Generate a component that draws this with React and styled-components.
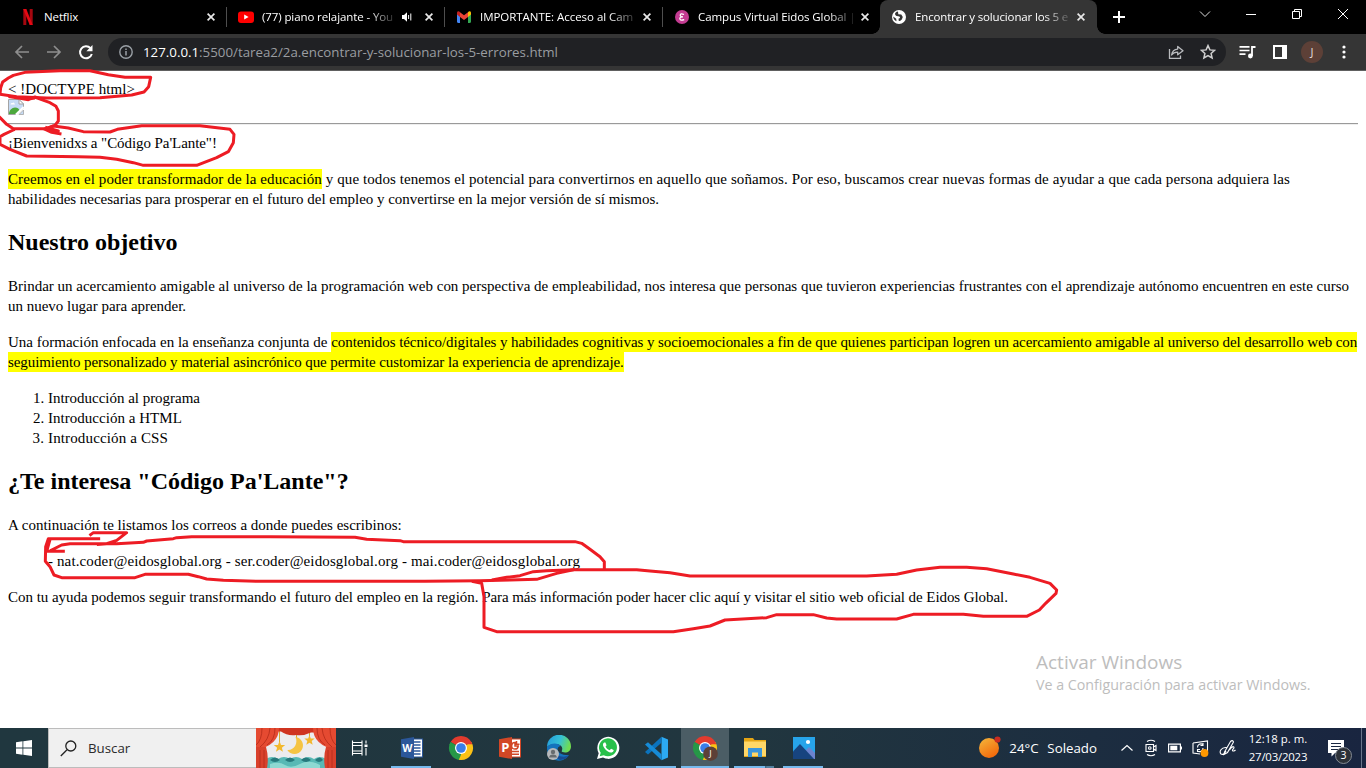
import React from "react";
import styled, { createGlobalStyle, css } from "styled-components";

const GlobalStyle = createGlobalStyle`
  * { box-sizing: border-box; }
  body { margin: 0; background: #fff; overflow: hidden; }
`;

const ui = `"Open Sans", "Noto Sans", sans-serif`;

const Screen = styled.div`
  position: relative;
  display: flex;
  flex-direction: column;
  width: 1366px;
  height: 768px;
  font-family: ${ui};
`;

/* ---------- Browser chrome ---------- */
const TabStrip = styled.div`
  display: flex;
  height: 34px;
  background: #000;
  padding-left: 9px;
`;
const Tab = styled.div`
  position: relative;
  display: flex;
  align-items: center;
  gap: 8px;
  width: 218px;
  height: 34px;
  padding: 0 12px 0 11px;
  color: #fff;
  ${(p) =>
    !p.$last &&
    css`
      &::after {
        content: "";
        position: absolute;
        right: 0;
        top: 7px;
        width: 1px;
        height: 20px;
        background: #4e4e4e;
      }
    `}
  ${(p) =>
    p.$active &&
    css`
      background: #353535;
      width: 217px;
      border-radius: 8px 8px 0 0;
      padding: 0 12px 0 11px;
      margin-left: -1px;
      &::before,
      &::after {
        content: "";
        position: absolute;
        bottom: 0;
        width: 8px;
        height: 8px;
      }
      &::before {
        left: -8px;
        background: radial-gradient(circle at 0 0, transparent 7.5px, #353535 8px);
      }
      &::after {
        right: -8px;
        background: radial-gradient(circle at 100% 0, transparent 7.5px, #353535 8px);
      }
    `}
`;
const TabTitle = styled.span`
  flex: 1;
  min-width: 0;
  white-space: pre;
  font-size: 11.5px;
  line-height: 16px;
  letter-spacing: ${(p) => p.$ls}px;
  ${(p) =>
    p.$fade &&
    css`
      mask-image: linear-gradient(90deg, #000 calc(100% - 26px), rgba(0, 0, 0, 0.15));
    `}
`;
const WindowControls = styled.div`
  display: flex;
  align-items: center;
  margin-left: auto;
  padding: 0 17px 6px 0;
  gap: 34px;
  color: #fff;
`;
const NewTab = styled.div`
  display: flex;
  align-items: center;
  margin-left: 16px;
`;
const Toolbar = styled.div`
  display: flex;
  align-items: center;
  height: 37px;
  padding: 0 14px 1px;
  background: #353535;
  border-bottom: 1px solid #606060;
`;
const NavButtons = styled.div`
  display: flex;
  align-items: center;
  gap: 16px;
  width: 94px;
`;
const Omnibox = styled.div`
  display: flex;
  align-items: center;
  width: 1118px;
  height: 28px;
  padding: 0 10px 0 11px;
  border-radius: 14px;
  background: #202124;
  gap: 10px;
`;
const Url = styled.div`
  flex: 1;
  white-space: pre;
  font-size: 13.3px;
  color: #9a9da1;
`;
const Host = styled.span`
  color: #fff;
`;
const OmniboxActions = styled.div`
  display: flex;
  gap: 16px;
`;
const Actions = styled.div`
  display: flex;
  align-items: center;
  gap: 14px;
  margin-left: 13px;
`;
const PanelButton = styled.div`
  display: flex;
  margin-left: 3px;
`;
const Avatar = styled.div`
  width: 22px;
  height: 22px;
  border-radius: 50%;
  background: #5d4037;
  color: #e6dedb;
  font-size: 11px;
  line-height: 22px;
  text-align: center;
`;

/* ---------- Web page ---------- */
const Page = styled.main`
  flex: 1;
  padding: 8px;
  background: #fff;
  color: #000;
  font: 15px/20px "Liberation Serif", "Times New Roman", serif;
`;
const Paragraph = styled.p`
  margin: ${(p) => (p.$indent ? "16px 40px" : "16px 0")};
`;
const Line = styled.div`
  height: 20px;
  white-space: pre;
  letter-spacing: ${(p) => p.$ls || 0}px;
`;
const Run = styled.span`
  letter-spacing: ${(p) => p.$ls || 0}px;
`;
const Mark = styled.mark`
  display: inline-block;
  height: 20px;
  background: #ff0;
  color: #000;
  letter-spacing: ${(p) => p.$ls || 0}px;
`;
const Heading = styled.h2`
  margin: 20px 0;
  font-size: 24px;
  line-height: 27px;
`;
const Picture = styled.div`
  display: flex;
  height: 16px;
`;
const Rule = styled.hr`
  margin: 8px 0;
  height: 2px;
  border: 0;
  border-top: 1px solid #9a9a9a;
  border-bottom: 1px solid #eee;
`;
const List = styled.ol`
  margin: 16px 0;
  padding-left: 40px;
`;
const Item = styled.li`
  height: 20px;
  letter-spacing: ${(p) => p.$ls || 0}px;
`;
const Watermark = styled.div`
  position: absolute;
  left: 1036px;
  top: 650px;
  color: #bdbdbd;
  white-space: nowrap;
`;
const WatermarkTitle = styled.div`
  font-size: 19px;
  line-height: 25px;
`;
const WatermarkText = styled.div`
  font-size: 14.25px;
  line-height: 20px;
`;
const Ink = styled.svg`
  position: absolute;
  left: 0;
  top: 66px;
  pointer-events: none;
`;

/* ---------- Taskbar ---------- */
const Taskbar = styled.footer`
  display: flex;
  height: 40px;
  background: linear-gradient(90deg, #20373f 0%, #21363f 55%, #1c2d40 80%, #192540 100%);
  color: #fff;
`;
const Start = styled.div`
  display: flex;
  align-items: center;
  justify-content: center;
  width: 48px;
`;
const Search = styled.div`
  display: flex;
  align-items: center;
  gap: 11px;
  width: 208px;
  padding-left: 11px;
  background: #f0f0f0;
  border: 1px solid #bcbcbc;
  border-right: 0;
  color: #2b2b2b;
  font-size: 13.3px;
`;
const TaskView = styled.div`
  display: flex;
  align-items: center;
  width: 51px;
  padding-left: 15px;
`;
const TaskButton = styled.div`
  position: relative;
  display: flex;
  align-items: center;
  justify-content: center;
  width: ${(p) => (p.$active ? 48 : 49)}px;
  margin-right: ${(p) => (p.$active ? 1 : 0)}px;
  background: ${(p) => (p.$active ? "#4b5d65" : "transparent")};
  ${(p) =>
    p.$open &&
    css`
      &::after {
        content: "";
        position: absolute;
        left: ${p.$active ? 0 : 4}px;
        right: ${p.$active ? 0 : 5}px;
        bottom: 0;
        height: 2px;
        background: ${p.$stacked
          ? "linear-gradient(90deg,#76b9ed 31px,#3c5f78 31px,#53809f 33px)"
          : "#76b9ed"};
      }
    `}
`;
const Weather = styled.div`
  display: flex;
  align-items: center;
  margin-left: auto;
  font-size: 13.3px;
  white-space: pre;
`;
const Temperature = styled.span`
  width: 38px;
  margin-left: 8px;
`;
const Tray = styled.div`
  display: flex;
  align-items: center;
  margin-left: 23px;
  gap: 10px;
`;
const Clock = styled.div`
  width: 60px;
  margin-left: 11px;
  padding-top: 2px;
  font-size: 11.4px;
  line-height: 18px;
  text-align: center;
  white-space: nowrap;
`;
const DateText = styled.div`
  letter-spacing: -0.2px;
`;
const Notices = styled.div`
  position: relative;
  display: flex;
  align-items: center;
  width: 33px;
  margin-left: 20px;
`;
const NoticeCount = styled.div`
  position: absolute;
  left: 7px;
  top: 19px;
  width: 17px;
  height: 17px;
  border: 1px solid #858b94;
  border-radius: 50%;
  background: #2c3138;
  font-size: 10.5px;
  line-height: 15px;
  text-align: center;
`;
const ShowDesktop = styled.div`
  width: 5px;
  border-left: 1px solid #69758a;
`;

const CloseIcon = () => (
  <svg width="8" height="8" viewBox="0 0 8 8">
    <path d="M.6.6l6.8 6.8M7.4.6L.6 7.4" stroke="#e8e8e8" strokeWidth="1.7" />
  </svg>
);
const NetflixIcon = () => (
  <svg width="16" height="16" viewBox="0 0 16 16">
    <path d="M3.3 0h3v16h-3zM9.7 0h3v16h-3z" fill="#a5070f" />
    <path d="M3.3 0h3l6.4 16h-3z" fill="#e50914" />
  </svg>
);
const YoutubeIcon = () => (
  <svg width="16" height="16" viewBox="0 0 16 16">
    <rect y="2.5" width="16" height="11.5" rx="3" fill="#f00" />
    <path d="M6.2 5.6v5l4.4-2.5z" fill="#fff" />
  </svg>
);
const AudioIcon = () => (
  <svg width="10" height="10" viewBox="0 0 10 10" style={undefined}>
    <path d="M0 3h2L5 .3v9.4L2 7H0z" fill="#fff" />
    <path d="M6.6 3v4M8.8 1.5v7" stroke="#fff" strokeWidth="1" />
  </svg>
);
const AudioSlot = styled.div`
  display: flex;
  margin-right: 5px;
`;
const GmailIcon = () => (
  <svg width="16" height="16" viewBox="0 0 16 16">
    <path d="M1 4v8.8c0 .7.4 1.2 1.2 1.2H4V6z" fill="#4285f4" />
    <path d="M12 6v8h1.8c.8 0 1.2-.5 1.2-1.2V4z" fill="#34a853" />
    <path d="M12 3.2V8l3-2.4V4c0-1.8-1.8-2.4-3-.8z" fill="#fbbc04" />
    <path d="M4 3.2V8L1 5.6V4c0-1.8 1.8-2.4 3-.8z" fill="#c5221f" />
    <path d="M4 3.2l4 3.1 4-3.1V8l-4 3-4-3z" fill="#ea4335" />
  </svg>
);
const EidosIcon = () => (
  <svg width="16" height="16" viewBox="0 0 16 16">
    <circle cx="8" cy="8" r="7" fill="#c33b91" />
    <path d="M10 5.5Q6.2 4 6.2 6.3 6.2 7.7 9 7.8 5.8 7.8 5.8 9.6 6 12 10.2 10.6" fill="none" stroke="#fff" strokeWidth="1.2" />
  </svg>
);
const GlobeIcon = () => (
  <svg width="16" height="16" viewBox="0 0 16 16">
    <circle cx="8" cy="8" r="7" fill="#fff" />
    <path d="M7 2.5q-3 .5-3 2.800Q4.500 7.500 7.500 7.300 9.300 7.500 9 9l-1.500.8.300 2.200q1 .5 3-1.500l1-2.500-1.500-2.500-3-.2z" fill="#353535" />
    <path d="M2.200 7.500l3 2.200.3 2.600q-3-1.200-3.300-4.800z" fill="#353535" />
  </svg>
);
const ArrowIcon = ({ flip }) => (
  <svg width="16" height="16" viewBox="0 0 16 16">
    <path
      d={flip ? "M1 8h13M8 2l6 6-6 6" : "M15 8H2M8 2L2 8l6 6"}
      fill="none"
      stroke="#8e8e8e"
      strokeWidth="1.7"
    />
  </svg>
);
const ReloadIcon = () => (
  <svg width="16" height="16" viewBox="0 0 16 16">
    <path d="M12.5 4.2A6 6 0 1 0 13.8 10" fill="none" stroke="#fff" strokeWidth="2" />
    <path d="M14.5 1v6.2H8.4z" fill="#fff" />
  </svg>
);
const InfoIcon = () => (
  <svg width="14" height="14" viewBox="0 0 14 14">
    <circle cx="7" cy="7" r="6.2" fill="none" stroke="#9aa0a6" strokeWidth="1.4" />
    <path d="M7 6v4.4M7 3.4v1.5" stroke="#9aa0a6" strokeWidth="1.5" />
  </svg>
);
const ShareIcon = () => (
  <svg width="16" height="16" viewBox="0 0 16 16" fill="none" stroke="#b9bbbe" strokeWidth="1.3">
    <path d="M1.500 5v9.300h11V11.500" />
    <path d="M3.600 11C4.200 7 6.200 5.200 9.700 5.100V2.400L15 6.800l-5.300 4V8.100C6.800 8 5 8.800 3.600 11z" strokeLinejoin="round" />
  </svg>
);
const StarIcon = () => (
  <svg width="16" height="16" viewBox="0 0 16 16">
    <path d="M8 1.600l1.900 4.300 4.700.4-3.500 3.100 1 4.600L8 11.600 3.900 14l1-4.600-3.500-3.100 4.700-.4z" fill="none" stroke="#d0d0d0" strokeWidth="1.5" />
  </svg>
);
const QueueIcon = () => (
  <svg width="17" height="14" viewBox="0 0 17 14">
    <path d="M.5 1.800h10M.5 5.500h10M.5 9.200h6" stroke="#fff" strokeWidth="1.7" />
    <path d="M13 11V2h3.500" fill="none" stroke="#fff" strokeWidth="1.8" />
    <circle cx="11.400" cy="11" r="2.400" fill="#fff" />
  </svg>
);
const PanelIcon = () => (
  <svg width="14" height="14" viewBox="0 0 14 14">
    <path fillRule="evenodd" d="M0 0h14v14H0zM2 2v10h7V2z" fill="#fff" />
  </svg>
);
const MenuIcon = () => (
  <svg width="14" height="14" viewBox="0 0 14 14" fill="#fff">
    <circle cx="7" cy="2" r="1.600" />
    <circle cx="7" cy="7" r="1.600" />
    <circle cx="7" cy="12" r="1.600" />
  </svg>
);

const BrokenImage = () => (
  <svg width="16" height="16" viewBox="0 0 16 16">
    <path d="M.5.5h10.500l4.500 4.500v4.500L9 15.500H.5z" fill="#c6dbf5" stroke="#a4a4a4" />
    <path d="M11 .5v4.500h4.500z" fill="#fff" stroke="#a4a4a4" />
    <path d="M2.500 5.500q0-2 2-1.500 1.500-1.500 2.500 1.500z" fill="#fff" />
    <path d="M1 14q1-5 6-5.500 4 .2 5 4L9 15H1z" fill="#4ca83c" />
    <path d="M8 15.800L15.800 8" stroke="#fff" strokeWidth="2.400" />
    <path d="M15.500 11v4.500H11z" fill="#c6dbf5" stroke="#a4a4a4" strokeWidth=".8" />
  </svg>
);

const ChromeLogo = ({ profile }) => (
  <svg width="26" height="26" viewBox="0 0 26 26">
    <path d="M13 13L2.600 7A12 12 0 0 1 23.400 7z" fill="#e33b2e" />
    <path d="M13 13L23.400 7A12 12 0 0 1 13 25z" fill="#fbc116" />
    <path d="M13 13L13 25A12 12 0 0 1 2.600 7z" fill="#269847" />
    <path d="M13 7h10.400l.9 2.200H13z" fill="#e33b2e" />
    <path d="M18.200 16L13 25l-2.200-.3 4-8.700z" fill="#fbc116" />
    <path d="M7.800 16L2.600 7l-1 2.200 4 8.800z" fill="#269847" />
    <circle cx="13" cy="13" r="6" fill="#fff" />
    <circle cx="13" cy="13" r="4.800" fill="#3a7ee8" />
    {profile && <circle cx="18.500" cy="18.700" r="7.300" fill="#5d4037" />}
    {profile && (
      <text x="18.500" y="22" fontSize="9" textAnchor="middle" fill="#fff">J</text>
    )}
  </svg>
);
const OfficeLogo = ({ letter, color }) => (
  <svg width="24" height="24" viewBox="0 0 24 24">
    <rect x="11" y="3" width="11.500" height="18" fill="#fff" stroke={color} strokeWidth="1" />
    {letter === "W" ? (
      <path d="M14 6h6.500M14 9h6.500M14 12h6.500M14 15h6.500M14 18h6.500" stroke={color} strokeWidth="1.400" />
    ) : (
      <path d="M17 6.500a3.300 3.300 0 1 0 3.200 3.600H17zM18.500 5v3.200h3M14 15.500h7M14 18.300h7" fill="none" stroke={color} strokeWidth="1.500" />
    )}
    <path d="M1 3.200L14 1v22L1 20.800z" fill={color} />
    <text x="7.400" y="16.200" fontSize={letter === "W" ? 10.500 : 13} fontWeight="700" textAnchor="middle" fill="#fff">
      {letter}
    </text>
  </svg>
);
const EdgeLogo = () => (
  <svg width="26" height="26" viewBox="0 0 26 26">
    <defs>
      <linearGradient id="edgeTop" x1="0" x2="1" y1=".1" y2=".4">
        <stop offset="0" stopColor="#239bdc" />
        <stop offset=".55" stopColor="#35c1d7" />
        <stop offset="1" stopColor="#70dc51" />
      </linearGradient>
    </defs>
    <path d="M1 12A12 12 0 0 1 25 11.500c0 5-4.500 7-8.500 5.600-1.500-.6-.4-1.500-.2-3C16.500 9 7 7 1 12z" fill="url(#edgeTop)" />
    <path d="M1 12C5 7 13 8 14.500 11c-5 1-4.500 9.500 8.500 9.300A12 12 0 0 1 1 13z" fill="#1473bd" />
    <path d="M10 14c-1 6 6 10 13 6.300A12 12 0 0 1 14 25C9 23 8 18 10 14z" fill="#174b93" />
    <circle cx="7" cy="19" r="6" fill="#b7b9bc" />
    <circle cx="7" cy="17" r="2.200" fill="#686c70" />
    <path d="M3.200 22.500q0-3 3.800-3t3.800 3z" fill="#686c70" />
  </svg>
);
const WhatsappLogo = () => (
  <svg width="24" height="24" viewBox="0 0 24 24">
    <path d="M1 23l1.700-5.800A11 11 0 1 1 7 21.500z" fill="#fff" />
    <path d="M3.700 20.300l1-3.600A9 9 0 1 1 7.700 19.300z" fill="#28c04b" />
    <path d="M8.300 6.500c-2 1-1.500 3.500.2 5.700 2 2.800 5.500 5 7.700 4 1.400-.6 1.600-1.800 1.400-2.200l-2.500-1.300-1.500 1.500c-2-.7-3.200-2-4-3.600l1-1.300-1.200-2.700z" fill="#fff" />
  </svg>
);
const CodeLogo = () => (
  <svg width="25" height="25" viewBox="0 0 25 25">
    <path d="M17.500.8L24 3.500v18l-6.500 2.700z" fill="#2caaf2" />
    <path d="M17.500.8v6L4 18.500 1 16z" fill="#0b73bd" />
    <path d="M1 8.500L4 6.300l13.500 12v5.900z" fill="#168bd7" />
  </svg>
);
const FolderLogo = () => (
  <svg width="24" height="22" viewBox="0 0 24 22">
    <path d="M1 1h9l1.500 2H23v17H1z" fill="#e5a514" />
    <path d="M1 4.500h22V19H1z" fill="#ffd767" />
    <path d="M5 20v-9h14v9h-4v-4.500H9V20z" fill="#3a96dc" />
  </svg>
);
const PhotosLogo = () => (
  <svg width="22" height="22" viewBox="0 0 22 22">
    <rect width="22" height="22" fill="#27a4ea" />
    <path d="M11 15l5-5 6 6v6H11z" fill="#6c83cf" />
    <path d="M0 14.500L7 7l14 15H0z" fill="#17447f" />
    <circle cx="15" cy="5" r="2.100" fill="#fff" />
  </svg>
);
const TheaterArt = () => (
  <svg width="80" height="40" viewBox="0 0 80 40">
    <rect width="80" height="40" fill="#ececee" />
    <path d="M10 31q6-4 12 0 6-4 12 0 6-4 12 0 6-4 12 0 6-4 12 0v9H10z" fill="#58b9b5" />
    <path d="M14 32q5-5 10 0-5 4-10 0M29 32q5-5 10 0-5 4-10 0M45 32q5-5 10 0-5 4-10 0M59 32q5-5 8 0-4 4-8 0" fill="#26797c" />
    <path d="M14 36q9-3 15 1t15-1 20 1v3H14z" fill="#8ed9d2" />
    <path d="M23.500 2v12M40.500 2v8M53.500 2v7" stroke="#d9a92f" />
    <path d="M23.500 13l1.500 4 4.200.1-3.300 2.700 1 4-3.500-2.300-3.500 2.300 1.200-4-3.300-2.700 4.200-.1zM53.500 7l1.300 3.500 3.900.1-3 2.400 1 3.700-3.200-2-3.200 2 1-3.700-3-2.400 3.900-.1z" fill="#f2b82e" />
    <path d="M39.500 9a8.500 8.500 0 1 1-8.200 13c7 .5 11-7 8.200-13z" fill="#f5c443" />
    <path d="M12 0h56q-4 5-13 4.500Q48 8 40 7q-9 1-15-3.500Q16 4 12 0z" fill="#cf3420" />
    <path d="M0 0h23q0 17-23 22zM80 0H57q0 17 23 22z" fill="#e54a31" />
    <path d="M0 19h10q3 10 1 21H0zM80 19H70q-3 10-1 21h11z" fill="#d9402b" />
    <path d="M6 0Q6 12 0 17M14 0q-1 12-10 19M19 0q0 12-8 17M74 0q0 12 6 17M66 0q1 12 10 19M61 0q0 12 8 17M4 22v18M8 22v18M72 22v18M76 22v18" fill="none" stroke="#b32b19" strokeWidth=".8" />
  </svg>
);

const tabs = [
  { icon: <NetflixIcon />, title: "Netflix", ls: -0.12 },
  { icon: <YoutubeIcon />, title: "(77) piano relajante - You", ls: -0.1, audio: true, fade: true },
  { icon: <GmailIcon />, title: "IMPORTANTE: Acceso al Cam", ls: -0.04, fade: true },
  { icon: <EidosIcon />, title: "Campus Virtual Eidos Global |", ls: -0.1, fade: true },
  { icon: <GlobeIcon />, title: "Encontrar y solucionar los 5 e", ls: -0.15, fade: true },
];

export default function App() {
  return (
    <Screen>
      <GlobalStyle />
      <TabStrip>
        {tabs.map((t, i) => (
          <Tab key={t.title} $active={i === 4} $last={i > 2}>
            {t.icon}
            <TabTitle $ls={t.ls} $fade={t.fade}>{t.title}</TabTitle>
            {t.audio && <AudioSlot><AudioIcon /></AudioSlot>}
            <CloseIcon />
          </Tab>
        ))}
        <NewTab>
          <svg width="12" height="12" viewBox="0 0 12 12">
            <path d="M6 0v12M0 6h12" stroke="#fff" strokeWidth="2" />
          </svg>
        </NewTab>
        <WindowControls>
          <svg width="12" height="12" viewBox="0 0 12 12"><path d="M1 3.500l5 5 5-5" fill="none" stroke="#ddd" /></svg>
          <svg width="12" height="12" viewBox="0 0 12 12"><path d="M1 6.500h10" stroke="#fff" /></svg>
          <svg width="12" height="12" viewBox="0 0 12 12"><path d="M1.500 3.500h7v7h-7zM3.500 3.500v-2h7v7h-2" fill="none" stroke="#fff" /></svg>
          <svg width="12" height="12" viewBox="0 0 12 12"><path d="M1 1l10 10M11 1L1 11" stroke="#fff" /></svg>
        </WindowControls>
      </TabStrip>
      <Toolbar>
        <NavButtons>
          <ArrowIcon />
          <ArrowIcon flip />
          <ReloadIcon />
        </NavButtons>
        <Omnibox>
          <InfoIcon />
          <Url>
            <Host>127.0.0.1</Host>:5500/tarea2/2a.encontrar-y-solucionar-los-5-errores.html
          </Url>
          <OmniboxActions>
            <ShareIcon />
            <StarIcon />
          </OmniboxActions>
        </Omnibox>
        <Actions>
          <QueueIcon />
          <PanelButton><PanelIcon /></PanelButton>
          <Avatar>J</Avatar>
          <MenuIcon />
        </Actions>
      </Toolbar>

      <Page>
        <Line $ls={0.056}>{"< !DOCTYPE html>"}</Line>
        <Picture><BrokenImage /></Picture>
        <Rule />
        <Line $ls={-0.07}>¡Bienvenidxs a "Código Pa'Lante"!</Line>
        <Paragraph as="div">
          <Line>
            <Mark $ls={0.092}>Creemos en el poder transformador de la educación</Mark>
            <Run $ls={0.086}> y que todos tenemos el potencial para convertirnos en aquello que soñamos. Por eso, buscamos crear nuevas formas de ayudar a que cada persona adquiera las</Run>
          </Line>
          <Line $ls={-0.02}>habilidades necesarias para prosperar en el futuro del empleo y convertirse en la mejor versión de sí mismos.</Line>
        </Paragraph>
        <Heading>Nuestro objetivo</Heading>
        <Paragraph as="div">
          <Line $ls={-0.004}>Brindar un acercamiento amigable al universo de la programación web con perspectiva de empleabilidad, nos interesa que personas que tuvieron experiencias frustrantes con el aprendizaje autónomo encuentren en este curso</Line>
          <Line $ls={-0.02}>un nuevo lugar para aprender.</Line>
        </Paragraph>
        <Paragraph as="div">
          <Line>
            {"Una formación enfocada en la enseñanza conjunta de "}
            <Mark $ls={-0.07}>contenidos técnico/digitales y habilidades cognitivas y socioemocionales a fin de que quienes participan logren un acercamiento amigable al universo del desarrollo web con</Mark>
          </Line>
          <Line>
            <Mark $ls={-0.08}>seguimiento personalizado y material asincrónico que permite customizar la experiencia de aprendizaje.</Mark>
          </Line>
        </Paragraph>
        <List>
          <Item $ls={-0.02}>Introducción al programa</Item>
          <Item $ls={0.03}>Introducción a HTML</Item>
          <Item $ls={0.14}>Introducción a CSS</Item>
        </List>
        <Heading>¿Te interesa "Código Pa'Lante"?</Heading>
        <Paragraph>A continuación te listamos los correos a donde puedes escribinos:</Paragraph>
        <Paragraph as="div" $indent>
          <Line $ls={0.124}>- nat.coder@eidosglobal.org - ser.coder@eidosglobal.org - mai.coder@eidosglobal.org</Line>
        </Paragraph>
        <Line>
          <Run $ls={-0.03}>{"Con tu ayuda podemos seguir transformando el futuro del empleo en la región. "}</Run>
          <Run $ls={-0.075}>Para más información poder hacer clic aquí y visitar el sitio web oficial de Eidos Global.</Run>
        </Line>
      </Page>

      <Watermark>
        <WatermarkTitle>Activar Windows</WatermarkTitle>
        <WatermarkText>Ve a Configuración para activar Windows.</WatermarkText>
      </Watermark>

      <Ink width="1366" height="600" viewBox="0 0 4098 1800" fill="none" stroke="#ed1c24" strokeWidth="9" strokeLinejoin="round" strokeLinecap="square">
        <path d="M0 85L2 65 8 48 25 36 40 28 75 19 180 14 270 14 325 26 350 30 375 34 452 34 446 62 432 78 395 87 300 95 140 96 50 92 0 85" />
        <path d="M30 92L60 97 85 101 105 93 125 101 150 110 168 121 175 135 175 165 165 178 140 188 40 188 20 175 0 155M85 99L100 97" />
        <path d="M0 230L0 212 12 205 40 192M135 190L155 199 180 203M137 188L160 180 205 186 250 197 330 198 352 190 425 179 600 179 690 190 702 205 700 230 685 257 650 275 590 298 430 298 400 290 350 280 300 274 235 272 80 270 30 250 0 235M140 185L175 195 150 188" />
        <g transform="translate(0 1302)">
          <path d="M296 116H145L137 140 136 184 150 200 162 225 185 233H405L435 223H565L595 230 620 237 670 241 775 244H1275L1440 242 1530 240 1610 238 1640 229 1670 220 1720 209M150 119L140 154H190M155 150L185 135 210 131H350L430 127 440 123 520 116 530 113 575 110H810L1065 112 1100 118 1200 122 1210 125H1725L1745 130 1770 148 1800 170 1813 185V205M272 104L280 98H380L350 121 320 131 295 133" />
          <path d="M1480 239L1520 232 1560 227 1600 215 1640 212 1720 209H1910L1950 213 2010 218 2070 228H2600L2690 223 2750 210 2820 202H2900L2960 206 3040 222 3090 232 3150 250 3170 270 3168 280 3137 310 3118 330 3080 349H2950L2890 343H2740L2690 357H2510L2480 354 2440 344H2330L2300 353 2175 360 2130 378 2080 386 2020 395H1490L1452 382V290L1445 250 1420 245" />
        </g>
      </Ink>

      <Taskbar>
        <Start>
          <svg width="16" height="16" viewBox="0 0 16 16" fill="#fff">
            <path d="M0 2.200l6.500-.9v6.300H0zM7.300 1.200L16 0v7.600H7.300zM0 8.400h6.500v6.300L0 13.800zM7.300 8.400H16V16l-8.700-1.200z" />
          </svg>
        </Start>
        <Search>
          <svg width="17" height="17" viewBox="0 0 17 17" fill="none" stroke="#222" strokeWidth="1.300">
            <circle cx="10.800" cy="6" r="5" />
            <path d="M7 9.700L.8 16" />
          </svg>
          Buscar
        </Search>
        <TheaterArt />
        <TaskView>
          <svg width="18" height="16" viewBox="0 0 18 16" fill="none" stroke="#fff" strokeWidth="1.100">
            <path d="M1.500.5v2h9.500v-2M1.500 15.500v-2h9.500v2M1.500 2.500v11M11 2.500v11M1.500 5.500h9.500M1.500 11h9.500M15 .5v3M15 8v7.500" />
            <path d="M13.500 4.500h3V7h-3z" fill="#fff" stroke="none" />
          </svg>
        </TaskView>
        <TaskButton $open><OfficeLogo letter="W" color="#2b579a" /></TaskButton>
        <TaskButton><ChromeLogo /></TaskButton>
        <TaskButton><OfficeLogo letter="P" color="#d24726" /></TaskButton>
        <TaskButton><EdgeLogo /></TaskButton>
        <TaskButton><WhatsappLogo /></TaskButton>
        <TaskButton $open><CodeLogo /></TaskButton>
        <TaskButton $open $active><ChromeLogo profile /></TaskButton>
        <TaskButton $open $stacked><FolderLogo /></TaskButton>
        <TaskButton $open><PhotosLogo /></TaskButton>
        <Weather>
          <svg width="23" height="24" viewBox="0 0 23 24">
            <defs>
              <linearGradient id="sun" x1="0" x2=".6" y1="0" y2="1">
                <stop offset="0" stopColor="#f5b83c" />
                <stop offset="1" stopColor="#f26a0c" />
              </linearGradient>
            </defs>
            <circle cx="11" cy="12" r="10" fill="url(#sun)" />
            <circle cx="19.500" cy="3.500" r="3.100" fill="#c92d20" />
          </svg>
          <Temperature>24°C</Temperature>Soleado
        </Weather>
        <Tray>
          <svg width="14" height="14" viewBox="0 0 14 14"><path d="M1.500 9.500l5.500-5 5.500 5" fill="none" stroke="#fff" strokeWidth="1.200" /></svg>
          <svg width="14" height="18" viewBox="0 0 14 18" fill="none" stroke="#fff" strokeWidth="1.100">
            <path d="M3 2.500q4-2.500 8 0M3 15.500q4 2.500 8 0M2 5.500h7.500v7H2zM9.500 8l2.500-1.500v5L9.500 10" />
            <circle cx="5.800" cy="9" r="1.300" />
          </svg>
          <svg width="14" height="10" viewBox="0 0 14 10"><path d="M.6 1.100h11.800v7.800H.6z" fill="none" stroke="#fff" strokeWidth="1.200" /><path d="M2.300 2.800h7v4.400h-7zM12.500 3.500H14v3h-1.500z" fill="#fff" /></svg>
          <svg width="17" height="17" viewBox="0 0 17 17" fill="none" stroke="#fff">
            <path d="M1 3L15.500 1v10M1 3v10l7 1M11 4.500a3.500 3.500 0 0 0-5.500 3M11 3v2.500H8.500M5.500 11a3.500 3.500 0 0 0 5.500-3M5.500 12V9.500H8" strokeWidth="1.100" />
            <circle cx="12.500" cy="13" r="3.900" fill="#ff9800" stroke="none" />
          </svg>
          <svg width="18" height="18" viewBox="0 0 18 18" fill="none" stroke="#fff" strokeWidth="1.100">
            <path d="M5.500 13L11.500 2.500q2-2 3 .5L8.500 13.500 5 15.500zM7.500 8.500C2 8 0 13 2 15c2 1 4-1 5-3M10.500 11c2-3.500 4.500-4 4.500-2.500s-2 2-1.500 3 2 .5 3-.5" />
          </svg>
        </Tray>
        <Clock>
          12:18 p. m.
          <DateText>27/03/2023</DateText>
        </Clock>
        <Notices>
          <svg width="17" height="17" viewBox="0 0 17 17">
            <path d="M0 0h16v13H7l-3.500 3.500V13H0z" fill="#fff" />
            <path d="M3 3.500h10M3 6.500h10M3 9.500h7" stroke="#1a2842" strokeWidth="1" />
          </svg>
          <NoticeCount>3</NoticeCount>
        </Notices>
        <ShowDesktop />
      </Taskbar>
    </Screen>
  );
}
